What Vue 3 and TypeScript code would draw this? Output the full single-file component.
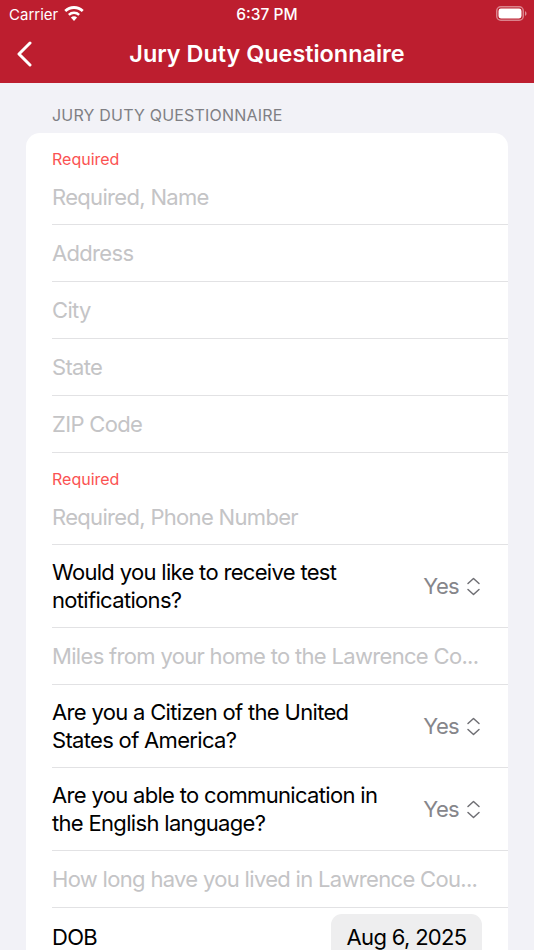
<script setup lang="ts">
interface Row { kind: 'input' | 'select'; text: string; required?: boolean; lines?: string[] }
const rows: Row[] = [
  { kind: 'input', text: 'Required, Name', required: true },
  { kind: 'input', text: 'Address' },
  { kind: 'input', text: 'City' },
  { kind: 'input', text: 'State' },
  { kind: 'input', text: 'ZIP Code' },
  { kind: 'input', text: 'Required, Phone Number', required: true },
  { kind: 'select', text: '', lines: ['Would you like to receive test', 'notifications?'] },
  { kind: 'input', text: 'Miles from your home to the Lawrence Co...' },
  { kind: 'select', text: '', lines: ['Are you a Citizen of the United', 'States of America?'] },
  { kind: 'select', text: '', lines: ['Are you able to communication in', 'the English language?'] },
  { kind: 'input', text: 'How long have you lived in Lawrence Cou...' },
]
</script>

<template>
  <div class="screen">
    <header class="nav">
      <div class="status">
        <div class="carrier">
          <span>Carrier</span>
          <svg class="wifi" width="20" height="16" viewBox="0 0 20 16">
            <path d="M10 16 L6.9 12.6 A4.6 4.6 0 0 1 13.1 12.6 Z" fill="#fff" />
            <path d="M4 8.9 A8.8 8.8 0 0 1 16 8.9 L14.3 10.8 A6.3 6.3 0 0 0 5.7 10.8 Z" fill="#fff" />
            <path d="M0.3 5 A14 14 0 0 1 19.7 5 L17.8 7 A11.3 11.3 0 0 0 2.2 7 Z" fill="#fff" />
          </svg>
        </div>
        <span class="time">6:37 PM</span>
        <svg class="battery" width="31" height="15" viewBox="0 0 31 15">
          <rect x="0.75" y="0.75" width="26.5" height="13.5" rx="4" fill="none" stroke="#fff" stroke-opacity="0.45" stroke-width="1.5" />
          <rect x="2.5" y="2.5" width="23" height="10" rx="2.4" fill="#fff" />
          <path d="M29 5.2 C30 5.6 30.5 6.4 30.5 7.5 C30.5 8.6 30 9.4 29 9.8 Z" fill="#fff" fill-opacity="0.5" />
        </svg>
      </div>
      <div class="bar">
        <svg class="back" width="16" height="26" viewBox="0 0 16 26">
          <path d="M14 2 L3 13 L14 24" fill="none" stroke="#fff" stroke-width="3" stroke-linecap="round" stroke-linejoin="round" />
        </svg>
        <h1 class="title">Jury Duty Questionnaire</h1>
      </div>
    </header>

    <main class="content">
      <div class="section-title">JURY DUTY QUESTIONNAIRE</div>
      <section class="card">
        <div v-for="(r, i) in rows" :key="i" class="row" :class="[r.kind, { req: r.required }]">
          <template v-if="r.kind === 'input'">
            <div v-if="r.required" class="required">Required</div>
            <div class="placeholder">{{ r.text }}</div>
          </template>
          <template v-else>
            <div class="question">
              <div v-for="l in r.lines" :key="l">{{ l }}</div>
            </div>
            <div class="picker">
              <span>Yes</span>
              <svg width="15" height="19" viewBox="0 0 15 19">
                <path d="M2 6.5 L7.5 1.5 L13 6.5 M2 12.5 L7.5 17.5 L13 12.5" fill="none" stroke="#6f6f74" stroke-width="1.5" stroke-linecap="round" stroke-linejoin="round" />
              </svg>
            </div>
          </template>
        </div>
        <div class="row dob">
          <span class="label">DOB</span>
          <span class="date">Aug 6, 2025</span>
        </div>
      </section>
    </main>
  </div>
</template>

<style scoped>
.screen {
  width: 534px;
  height: 950px;
  overflow: hidden;
  background: #f2f2f7;
  font-family: Inter, "Liberation Sans", sans-serif;
  color: #000;
}
.nav {
  height: 83px;
  background: #bd1e2f;
  color: #fff;
  box-sizing: border-box;
}
.status {
  height: 28px;
  position: relative;
  display: flex;
  align-items: center;
  justify-content: space-between;
  padding: 0 9px;
}
.carrier {
  display: flex;
  align-items: center;
  gap: 6px;
  font-size: 15px;
}
.wifi { margin-top: -3px; }
.time {
  position: absolute;
  left: 0;
  right: 0;
  text-align: center;
  font-size: 15.5px;
  font-weight: 500;
}
.battery { margin-left: auto; margin-right: -2px; margin-top: -2px; }
.bar {
  height: 55px;
  position: relative;
  display: flex;
  align-items: center;
  justify-content: center;
}
.back {
  position: absolute;
  left: 16px;
  top: 13px;
}
.title {
  margin: 0 0 5px;
  font-size: 23.4px;
  font-weight: 600;
}
.content {
  padding: 0 26px;
}
.section-title {
  height: 50px;
  box-sizing: border-box;
  padding: 22px 0 0 26px;
  font-size: 16px;
  line-height: 20px;
  letter-spacing: 0.2px;
  color: #7f7f84;
}
.card {
  background: #fff;
  border-radius: 14px 14px 0 0;
  padding-left: 26px;
}
.row {
  height: 57px;
  box-sizing: border-box;
  border-bottom: 1px solid #e2e2e4;
  display: flex;
  align-items: center;
  font-size: 22px;
  letter-spacing: -0.68px;
}
.row.req {
  height: 92px;
  flex-direction: column;
  align-items: flex-start;
  justify-content: flex-start;
  padding-top: 16px;
}
.row.select {
  height: 83px;
  justify-content: space-between;
  padding-right: 26px;
}
.required {
  font-size: 16px;
  line-height: 20px;
  letter-spacing: 0;
  color: #fb5252;
}
.row.req .placeholder {
  margin-top: 14px;
}
.placeholder {
  color: #c4c4c6;
  line-height: 28px;
  white-space: nowrap;
}
.question {
  line-height: 28.5px;
  white-space: nowrap;
}
.picker {
  display: flex;
  align-items: center;
  gap: 7px;
  color: #86868b;
  margin-right: 1px;
}
.dob {
  border-bottom: 0;
  justify-content: space-between;
  padding-right: 26px;
  height: 60px;
  align-items: flex-start;
  padding-top: 6px;
}
.label {
  line-height: 46px;
}
.date {
  background: #eeeeef;
  border-radius: 11px;
  padding: 0 15.5px;
  line-height: 46px;
}
</style>
